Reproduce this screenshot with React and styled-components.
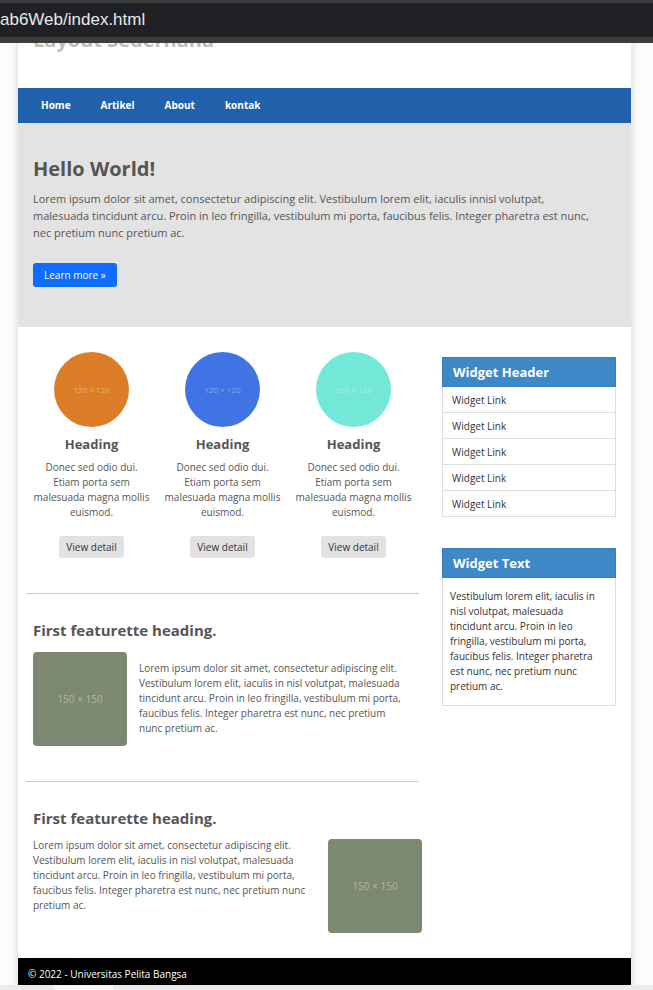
import React from "react";
import styled, { createGlobalStyle } from "styled-components";

const GlobalStyle = createGlobalStyle`
  * { box-sizing: border-box; }
  html, body { margin: 0; padding: 0; }
  body {
    background: #fcfcfc;
    font-family: "Open Sans", "Liberation Sans", sans-serif;
    overflow: hidden;
    height: 990px;
  }
`;

const AddressBar = styled.div`
  position: fixed;
  top: 0;
  left: 0;
  right: 0;
  z-index: 10;
  height: 43px;
  background: #202124;
  border-top: 3px solid #3b3b3b;
  border-bottom: 6px solid #3c3c3c;
  color: #e8eaed;
  font-family: "Liberation Sans", Arial, sans-serif;
  font-size: 17px;
  line-height: 34px;
  white-space: nowrap;
`;

const ScrollStrip = styled.div`
  position: fixed;
  left: 0;
  right: 0;
  bottom: 0;
  z-index: 10;
  height: 5px;
  background: #ebebeb;
`;

const ScrollThumb = styled.div`
  width: 60px;
  height: 100%;
  margin-left: 53px;
  background: #f5f5f5;
`;

const Page = styled.div`
  width: 613px;
  margin: 8px 0 0 18px;
  background: #fff;
  box-shadow: 0 0 9px rgba(0, 0, 0, 0.16);
`;

const Header = styled.header`
  height: 80px;
  padding: 16px 15px 0;
`;

const SiteTitle = styled.h1`
  margin: 0;
  font-size: 20px;
  font-weight: 700;
  line-height: 32px;
  color: #bdbdbd;
`;

const Nav = styled.nav`
  display: flex;
  height: 35px;
  padding-left: 8px;
  background: #2160ab;
`;

const NavLink = styled.a`
  padding: 0 15px;
  color: #fff;
  font-size: 10px;
  font-weight: 700;
  line-height: 35px;
  text-decoration: none;
`;

const Hero = styled.section`
  height: 204px;
  padding: 34px 15px 0;
  background: #e3e3e3;
`;

const HeroTitle = styled.h2`
  margin: 0;
  font-size: 20px;
  font-weight: 700;
  line-height: 24px;
  color: #555;
`;

const HeroText = styled.p`
  max-width: 566px;
  margin: 9px 0 0;
  font-size: 11px;
  line-height: 17px;
  color: #555;
`;

const PrimaryButton = styled.a`
  display: inline-block;
  margin-top: 22px;
  height: 24px;
  padding: 0 11px;
  border-radius: 3px;
  background: #0d6efd;
  color: #fff;
  font-size: 10px;
  line-height: 24px;
  text-decoration: none;
`;

const Content = styled.div`
  display: flex;
  align-items: flex-start;
  padding: 25px 0 0 8px;
`;

const MainCol = styled.main`
  width: 396px;
  padding-bottom: 25px;
`;

const Columns = styled.div`
  display: grid;
  grid-template-columns: repeat(3, 131px);
`;

const Column = styled.div`
  padding: 0 6px;
  text-align: center;
`;

const Circle = styled.div`
  display: flex;
  align-items: center;
  justify-content: center;
  width: 75px;
  height: 75px;
  margin: 0 auto;
  border-radius: 50%;
  background: ${(p) => p.$color};
  color: rgba(255, 255, 255, 0.38);
  font-size: 8px;
`;

const ColHeading = styled.h3`
  margin: 8px 0 0;
  font-size: 13px;
  font-weight: 700;
  line-height: 18px;
  color: #555;
`;

const ColText = styled.p`
  margin: 7px 0 0;
  font-size: 10px;
  line-height: 15px;
  color: #555;
`;

const DetailButton = styled.a`
  display: block;
  width: fit-content;
  height: 22px;
  margin: 16px auto 0;
  padding: 0 7px;
  border-radius: 3px;
  background: #e2e2e2;
  color: #333;
  font-size: 10px;
  line-height: 22px;
  text-decoration: none;
`;

const Divider = styled.hr`
  height: 0;
  margin: 35px 3px 0 0;
  border: 0;
  border-top: 1px solid #ccc;
`;

const Featurette = styled.section`
  padding: 26px 0 0 7px;
`;

const FeatHeading = styled.h2`
  margin: 0;
  font-size: 15px;
  font-weight: 700;
  line-height: 20px;
  color: #555;
`;

const FeatRow = styled.div`
  display: flex;
  align-items: flex-start;
  gap: 12px;
  margin-top: ${(p) => p.$top}px;
`;

const Placeholder = styled.div`
  display: flex;
  flex: none;
  align-items: center;
  justify-content: center;
  width: 94px;
  height: 94px;
  border-radius: 4px;
  background: #7d8870;
  color: rgba(255, 255, 255, 0.4);
  font-size: 10px;
`;

const FeatText = styled.p`
  width: ${(p) => p.$width}px;
  margin: ${(p) => p.$top}px 0 0;
  font-size: 10px;
  line-height: 15px;
  color: #555;
`;

const Sidebar = styled.aside`
  width: 174px;
  margin-left: 20px;
  padding-top: 5px;
`;

const Widget = styled.div`
  margin-top: ${(p) => p.$top || 0}px;
`;

const WidgetHeader = styled.h4`
  height: 30px;
  margin: 0;
  padding: 0 10px;
  border: 1px solid #3a7dbb;
  background: #3f88c8;
  color: #fff;
  font-size: 13px;
  font-weight: 700;
  line-height: 28px;
`;

const WidgetList = styled.ul`
  margin: 0;
  padding: 0;
  list-style: none;
  border: 1px solid #ddd;
  border-top: 0;
`;

const WidgetItem = styled.li`
  height: 26px;
  padding: 0 9px;
  border-bottom: 1px solid #ddd;
  color: #333;
  font-size: 10px;
  line-height: 26px;

  &:last-child {
    border-bottom: 0;
    height: 25px;
  }
`;

const WidgetBody = styled.div`
  padding: 11px 10px 11px 7px;
  border: 1px solid #ddd;
  border-top: 0;
  color: #333;
  font-size: 10px;
  line-height: 15px;
`;

const Footer = styled.footer`
  height: 32px;
  padding: 9px 10px 0;
  background: #000;
  color: #fff;
  font-size: 10px;
  line-height: 15px;
`;

const lorem =
  "Lorem ipsum dolor sit amet, consectetur adipiscing elit. Vestibulum lorem elit, iaculis in nisl volutpat, malesuada tincidunt arcu. Proin in leo fringilla, vestibulum mi porta, faucibus felis. Integer pharetra est nunc, nec pretium nunc pretium ac.";

const circles = ["#db7e27", "#4074e4", "#73e8d6"];

function App() {
  return (
    <>
      <GlobalStyle />
      <AddressBar>ab6Web/index.html</AddressBar>
      <Page>
        <Header>
          <SiteTitle>Layout Sederhana</SiteTitle>
        </Header>
        <Nav>
          <NavLink href="#">Home</NavLink>
          <NavLink href="#">Artikel</NavLink>
          <NavLink href="#">About</NavLink>
          <NavLink href="#">kontak</NavLink>
        </Nav>
        <Hero>
          <HeroTitle>Hello World!</HeroTitle>
          <HeroText>
            Lorem ipsum dolor sit amet, consectetur adipiscing elit. Vestibulum
            lorem elit, iaculis innisl volutpat, malesuada tincidunt arcu. Proin
            in leo fringilla, vestibulum mi porta, faucibus felis. Integer
            pharetra est nunc, nec pretium nunc pretium ac.
          </HeroText>
          <PrimaryButton href="#">Learn more »</PrimaryButton>
        </Hero>
        <Content>
          <MainCol>
            <Columns>
              {circles.map((c) => (
                <Column key={c}>
                  <Circle $color={c}>120 × 120</Circle>
                  <ColHeading>Heading</ColHeading>
                  <ColText>
                    Donec sed odio dui. Etiam porta sem malesuada magna mollis
                    euismod.
                  </ColText>
                  <DetailButton href="#">View detail</DetailButton>
                </Column>
              ))}
            </Columns>
            <Divider />
            <Featurette>
              <FeatHeading>First featurette heading.</FeatHeading>
              <FeatRow $top={12}>
                <Placeholder>150 × 150</Placeholder>
                <FeatText $width={268} $top={9}>
                  {lorem}
                </FeatText>
              </FeatRow>
            </Featurette>
            <Divider />
            <Featurette>
              <FeatHeading>First featurette heading.</FeatHeading>
              <FeatRow $top={11}>
                <FeatText $width={283} $top={-1}>
                  {lorem}
                </FeatText>
                <Placeholder>150 × 150</Placeholder>
              </FeatRow>
            </Featurette>
          </MainCol>
          <Sidebar>
            <Widget>
              <WidgetHeader>Widget Header</WidgetHeader>
              <WidgetList>
                {[1, 2, 3, 4, 5].map((i) => (
                  <WidgetItem key={i}>Widget Link</WidgetItem>
                ))}
              </WidgetList>
            </Widget>
            <Widget $top={31}>
              <WidgetHeader>Widget Text</WidgetHeader>
              <WidgetBody>
                Vestibulum lorem elit, iaculis in nisl volutpat, malesuada
                tincidunt arcu. Proin in leo fringilla, vestibulum mi porta,
                faucibus felis. Integer pharetra est nunc, nec pretium nunc
                pretium ac.
              </WidgetBody>
            </Widget>
          </Sidebar>
        </Content>
        <Footer>© 2022 - Universitas Pelita Bangsa</Footer>
      </Page>
      <ScrollStrip>
        <ScrollThumb />
      </ScrollStrip>
    </>
  );
}

export default App;
